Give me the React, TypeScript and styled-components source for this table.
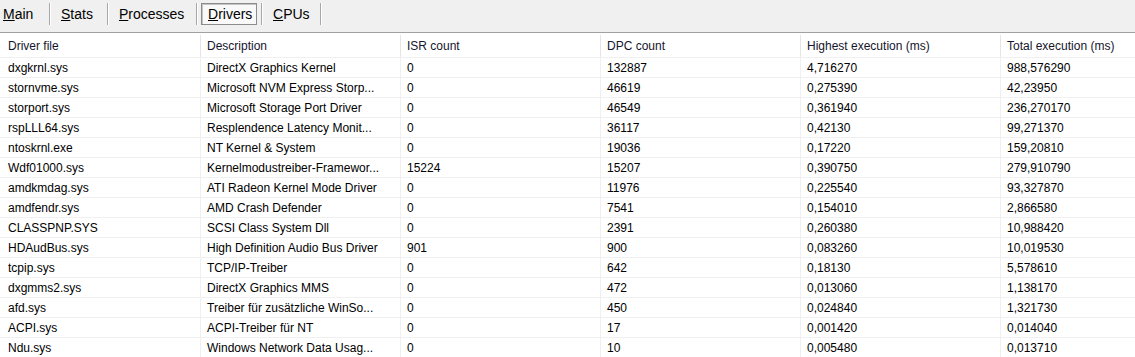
import { Fragment } from "react";
import styled, { createGlobalStyle } from "styled-components";

const GlobalStyle = createGlobalStyle`
  html, body {
    margin: 0;
    padding: 0;
    background: #ffffff;
    font-family: "Liberation Sans", Arial, sans-serif;
  }
`;

const Window = styled.div`
  width: 1135px;
  height: 357px;
  overflow: hidden;
  background: #ffffff;
`;

/* tab strip */
const TabBar = styled.div`
  display: flex;
  align-items: flex-start;
  height: 29px;
  padding: 3px 0 0 0;
  margin-left: -4px;
  background: #f0f0f0;
  border-bottom: 1px solid #a0a0a0;
`;

const Tab = styled.div<{ $w: number; $active?: boolean }>`
  box-sizing: border-box;
  width: ${(p) => p.$w}px;
  height: 22px;
  padding: 0 0 0 ${(p) => (p.$active ? 6 : 7)}px;
  display: flex;
  align-items: center;
  font-size: 14px;
  color: #000;
  background: ${(p) => (p.$active ? "#f9f9f9" : "transparent")};
  border: ${(p) => (p.$active ? "1px solid #8c8c8c" : "none")};
  box-shadow: ${(p) => (p.$active ? "inset 1px 1px 0 #c4c4c4" : "none")};

  u {
    text-decoration: underline;
    text-underline-offset: 1px;
  }
`;

const Sep = styled.div`
  width: 1px;
  height: 22px;
  margin: 0 4px;
  background: #a8a8a8;
  box-shadow: 1px 0 0 #ffffff;
`;

/* list view */
const Row = styled.div<{ $header?: boolean }>`
  display: grid;
  grid-template-columns: 200px 200px 200px 200px 200px 1fr;
  height: ${(p) => (p.$header ? 24 : 19)}px;
  border-bottom: 1px solid #f0f0f0;
  font-size: 12px;
  color: ${(p) => (p.$header ? "#15152c" : "#000")};
`;

const Cell = styled.div<{ $header?: boolean }>`
  display: flex;
  align-items: center;
  box-sizing: border-box;
  padding: 1px 0 0 6px;
  white-space: nowrap;
  overflow: hidden;
  border-left: 1px solid ${(p) => (p.$header ? "#e5e5e5" : "#f0f0f0")};
  ${(p) => (p.$header ? "margin-top: 2px; padding-top: 0;" : "")}

  &:first-child {
    border-left-color: transparent;
    padding-left: 7px;
  }
`;

const tabs = [
  { key: "M", rest: "ain", w: 49 },
  { key: "S", rest: "tats", w: 49 },
  { key: "P", rest: "rocesses", w: 80 },
  { key: "D", rest: "rivers", w: 56, active: true },
  { key: "C", rest: "PUs", w: 50 },
];

const columns = [
  "Driver file",
  "Description",
  "ISR count",
  "DPC count",
  "Highest execution (ms)",
  "Total execution (ms)",
];

const drivers: string[][] = [
  ["dxgkrnl.sys", "DirectX Graphics Kernel", "0", "132887", "4,716270", "988,576290"],
  ["stornvme.sys", "Microsoft NVM Express Storp...", "0", "46619", "0,275390", "42,23950"],
  ["storport.sys", "Microsoft Storage Port Driver", "0", "46549", "0,361940", "236,270170"],
  ["rspLLL64.sys", "Resplendence Latency Monit...", "0", "36117", "0,42130", "99,271370"],
  ["ntoskrnl.exe", "NT Kernel & System", "0", "19036", "0,17220", "159,20810"],
  ["Wdf01000.sys", "Kernelmodustreiber-Framewor...", "15224", "15207", "0,390750", "279,910790"],
  ["amdkmdag.sys", "ATI Radeon Kernel Mode Driver", "0", "11976", "0,225540", "93,327870"],
  ["amdfendr.sys", "AMD Crash Defender", "0", "7541", "0,154010", "2,866580"],
  ["CLASSPNP.SYS", "SCSI Class System Dll", "0", "2391", "0,260380", "10,988420"],
  ["HDAudBus.sys", "High Definition Audio Bus Driver", "901", "900", "0,083260", "10,019530"],
  ["tcpip.sys", "TCP/IP-Treiber", "0", "642", "0,18130", "5,578610"],
  ["dxgmms2.sys", "DirectX Graphics MMS", "0", "472", "0,013060", "1,138170"],
  ["afd.sys", "Treiber für zusätzliche WinSo...", "0", "450", "0,024840", "1,321730"],
  ["ACPI.sys", "ACPI-Treiber für NT", "0", "17", "0,001420", "0,014040"],
  ["Ndu.sys", "Windows Network Data Usag...", "0", "10", "0,005480", "0,013710"],
];

export default function App() {
  return (
    <>
      <GlobalStyle />
      <Window>
        <TabBar>
          {tabs.map((t) => (
            <Fragment key={t.key}>
              <Tab $w={t.w} $active={t.active}>
                <u>{t.key}</u>
                {t.rest}
              </Tab>
              <Sep />
            </Fragment>
          ))}
        </TabBar>
        <Row $header>
          {columns.map((c) => (
            <Cell key={c} $header>
              {c}
            </Cell>
          ))}
        </Row>
        {drivers.map((d) => (
          <Row key={d[0]}>
            {d.map((v, i) => (
              <Cell key={i}>{v}</Cell>
            ))}
          </Row>
        ))}
      </Window>
    </>
  );
}
